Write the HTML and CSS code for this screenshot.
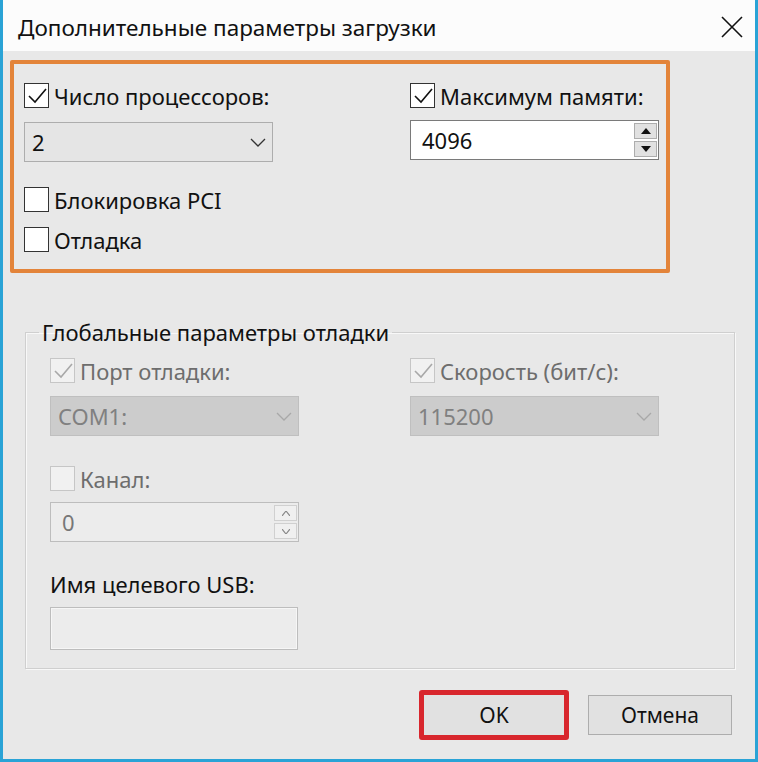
FILE: index.html
```html
<!DOCTYPE html>
<html lang="ru">
<head>
  <meta charset="UTF-8" />
  <title>Дополнительные параметры загрузки</title>
  <link rel="stylesheet" href="styles.css">
</head>
<body>
  <div class="window">
    <div class="titlebar">
      <span class="title">Дополнительные параметры загрузки</span>
      <svg class="close" width="22" height="22" viewBox="0 0 22 22">
        <path d="M1 1 L21 21 M21 1 L1 21" stroke="#111" stroke-width="1.6" fill="none"/>
      </svg>
    </div>

    <div class="content">
      <div class="highlight">
        <div class="col col-left">
          <label class="check">
            <span class="box checked">
              <svg width="22" height="22" viewBox="0 0 22 22"><path d="M3 11 L9 17 L20 4" stroke="#111" stroke-width="1.6" fill="none"/></svg>
            </span>
            Число процессоров:
          </label>
          <div class="select">
            <span>2</span>
            <svg width="16" height="9" viewBox="0 0 16 9"><path d="M1 1 L8 8 L15 1" stroke="#333" stroke-width="1.3" fill="none"/></svg>
          </div>
          <label class="check check-pci">
            <span class="box"></span>
            Блокировка PCI
          </label>
          <label class="check check-debug">
            <span class="box"></span>
            Отладка
          </label>
        </div>
        <div class="col col-right">
          <label class="check">
            <span class="box checked">
              <svg width="22" height="22" viewBox="0 0 22 22"><path d="M3 11 L9 17 L20 4" stroke="#111" stroke-width="1.6" fill="none"/></svg>
            </span>
            Максимум памяти:
          </label>
          <div class="spin">
            <span class="spin-value">4096</span>
            <div class="spin-btns">
              <span class="spin-btn"><svg width="10" height="6" viewBox="0 0 10 6"><path d="M0 6 L5 0 L10 6 Z" fill="#111"/></svg></span>
              <span class="spin-btn"><svg width="10" height="6" viewBox="0 0 10 6"><path d="M0 0 L5 6 L10 0 Z" fill="#111"/></svg></span>
            </div>
          </div>
        </div>
      </div>

      <fieldset class="group">
        <legend>Глобальные параметры отладки</legend>
        <div class="group-row">
          <div class="col col-left">
            <label class="check disabled">
              <span class="box checked">
                <svg width="22" height="22" viewBox="0 0 22 22"><path d="M3 11 L9 17 L20 4" stroke="#a8a8a8" stroke-width="1.6" fill="none"/></svg>
              </span>
              Порт отладки:
            </label>
            <div class="select disabled">
              <span>COM1:</span>
              <svg width="16" height="9" viewBox="0 0 16 9"><path d="M1 1 L8 8 L15 1" stroke="#a8a8a8" stroke-width="1.3" fill="none"/></svg>
            </div>
          </div>
          <div class="col col-right">
            <label class="check disabled">
              <span class="box checked">
                <svg width="22" height="22" viewBox="0 0 22 22"><path d="M3 11 L9 17 L20 4" stroke="#a8a8a8" stroke-width="1.6" fill="none"/></svg>
              </span>
              Скорость (бит/с):
            </label>
            <div class="select disabled">
              <span>115200</span>
              <svg width="16" height="9" viewBox="0 0 16 9"><path d="M1 1 L8 8 L15 1" stroke="#a8a8a8" stroke-width="1.3" fill="none"/></svg>
            </div>
          </div>
        </div>

        <label class="check disabled check-channel">
          <span class="box"></span>
          Канал:
        </label>
        <div class="spin disabled">
          <span class="spin-value">0</span>
          <div class="spin-btns">
            <span class="spin-btn"><svg width="8" height="5" viewBox="0 0 8 5"><path d="M0 5 L4 0 L8 5" stroke="#888" stroke-width="1.2" fill="none"/></svg></span>
            <span class="spin-btn"><svg width="8" height="5" viewBox="0 0 8 5"><path d="M0 0 L4 5 L8 0" stroke="#888" stroke-width="1.2" fill="none"/></svg></span>
          </div>
        </div>

        <div class="usb-label">Имя целевого USB:</div>
        <div class="textbox disabled"></div>
      </fieldset>

      <div class="buttons">
        <div class="ok-frame"><button class="btn">OK</button></div>
        <button class="btn btn-cancel">Отмена</button>
      </div>
    </div>
  </div>
</body>
</html>
```

FILE: styles.css
```css
body {
  margin: 0;
  font-family: "Noto Sans", "Open Sans", sans-serif;
  font-size: 22px;
  color: #111;
  background: #e8e8e8;
}
.window {
  width: 758px;
  height: 762px;
  box-sizing: border-box;
  border: 3px solid #2aa3d6;
  border-top: none;
  background: #e8e8e8;
}
.titlebar {
  height: 51px;
  background: #fcfcfc;
  display: flex;
  align-items: center;
  justify-content: space-between;
  padding: 0 12px 0 15px;
}
.title {
  font-size: 22.5px;
  margin-top: 4px;
}
.close {
  margin-top: 2px;
}
.content {
  padding: 9px 0 0 7px;
}
.highlight {
  width: 642px;
  height: 205px;
  border: 4px solid #e3843a;
  border-radius: 2px;
  display: flex;
  padding: 0 0 0 10px;
  box-sizing: content-box;
}
.highlight .col {
  padding-top: 19px;
}
.highlight .col-left {
  width: 386px;
}
.col-left {
  width: 360px;
}
.col-right {
  width: 250px;
}
.check {
  display: flex;
  align-items: center;
  height: 25px;
  gap: 5px;
  white-space: nowrap;
}
.box {
  width: 23px;
  height: 23px;
  border: 1px solid #333;
  background: #fff;
  display: flex;
  align-items: center;
  justify-content: center;
  flex: none;
}
.select {
  margin-top: 14px;
  height: 38px;
  border: 1px solid #adadad;
  background: #e5e5e5;
  display: flex;
  align-items: center;
  justify-content: space-between;
  padding: 0 6px 0 7px;
  box-sizing: content-box;
  width: 234px;
}
.check-pci {
  margin-top: 25px;
}
.check-debug {
  margin-top: 15px;
}
.spin {
  margin-top: 12px;
  height: 38px;
  border: 1px solid #7a7a7a;
  background: #fff;
  display: flex;
  align-items: center;
  justify-content: space-between;
  padding-left: 11px;
  box-sizing: content-box;
  width: 236px;
}
.spin-btns {
  display: flex;
  flex-direction: column;
  gap: 2px;
  margin-right: 1px;
}
.spin-btn {
  width: 23px;
  height: 16px;
  border: 1px solid #adadad;
  background: #e1e1e1;
  display: flex;
  align-items: center;
  justify-content: center;
  box-sizing: border-box;
}
.group {
  margin: 44px 0 0 15px;
  width: 710px;
  height: 352px;
  border: 1px solid #cfcfcf;
  box-shadow: inset 1px 1px 0 #f8f8f8, 1px 1px 0 #f8f8f8;
  padding: 11px 0 0 24px;
  box-sizing: border-box;
}
.group legend {
  padding: 0 3px;
  margin-left: -11px;
  color: #111;
}
.group-row {
  display: flex;
}
.check.disabled {
  color: #6d6d6d;
}
.check.disabled .box {
  border-color: #c6c6c6;
  background: #f1f1f1;
}
.select.disabled {
  margin-top: 13px;
  background: #cccccc;
  border-color: #bfbfbf;
  color: #808080;
}
.check-channel {
  margin-top: 30px;
}
.spin.disabled {
  margin-top: 11px;
  background: #ececec;
  border-color: #bdbdbd;
  color: #777;
}
.spin.disabled .spin-btn {
  background: #f0f0f0;
  border-color: #d0d0d0;
}
.usb-label {
  margin-top: 30px;
  height: 25px;
  line-height: 25px;
}
.textbox {
  margin-top: 10px;
  width: 246px;
  height: 41px;
  border: 1px solid #bdbdbd;
  background: #ececec;
  box-shadow: inset 0 0 0 1px #f6f6f6;
}
.buttons {
  display: flex;
  justify-content: flex-end;
  align-items: center;
  gap: 19px;
  margin: 21px 23px 0 0;
}
.ok-frame {
  border: 5px solid #d8262d;
  border-radius: 3px;
}
.btn {
  font-family: "Noto Sans", "Open Sans", sans-serif;
  font-size: 21px;
  color: #111;
  width: 140px;
  height: 40px;
  border: 1px solid #adadad;
  background: #e1e1e1;
  padding: 0;
}
.btn-cancel {
  width: 144px;
}
.ok-frame .btn {
  border: none;
}
```
